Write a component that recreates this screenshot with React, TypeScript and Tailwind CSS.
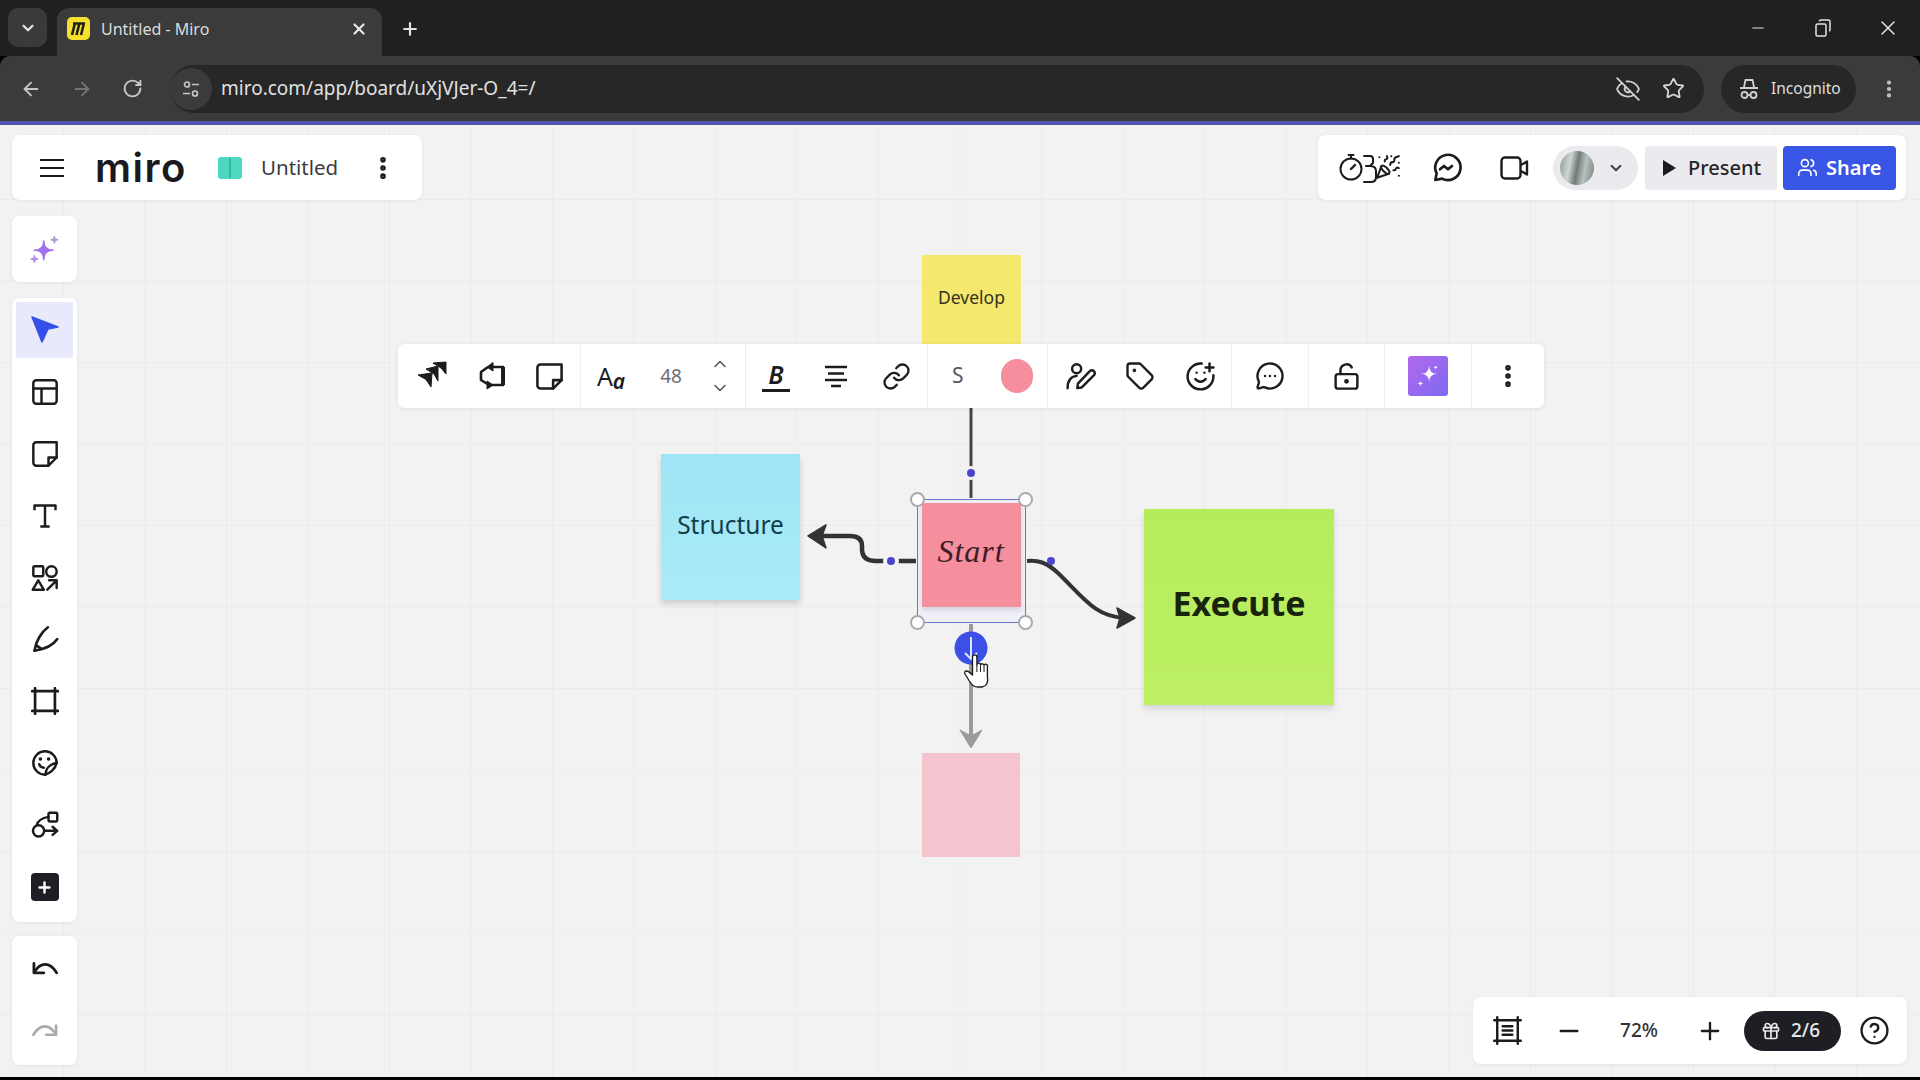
import type { ReactNode } from 'react'
import {
  ArrowLeft,
  ArrowRight,
  ChevronDown,
  ChevronUp,
  EllipsisVertical,
  EyeOff,
  Link,
  LockKeyholeOpen,
  MessageCircleMore,
  Minus,
  PartyPopper,
  Plus,
  RotateCw,
  SmilePlus,
  Star,
  Tag,
  Users,
  X,
  CircleHelp,
  Gift,
} from 'lucide-react'

// ── Small helpers ────────────────────────────────────────────────────────────
function Ico({ size = 28, sw = 2, className, children }: { size?: number; sw?: number; className?: string; children: ReactNode }) {
  return (
    <svg
      width={size}
      height={size}
      viewBox="0 0 24 24"
      fill="none"
      stroke="currentColor"
      strokeWidth={sw}
      strokeLinecap="round"
      strokeLinejoin="round"
      className={className}
    >
      {children}
    </svg>
  )
}

function star(cx: number, cy: number, r: number) {
  return `M${cx} ${cy - r}Q${cx} ${cy} ${cx + r} ${cy}Q${cx} ${cy} ${cx} ${cy + r}Q${cx} ${cy} ${cx - r} ${cy}Q${cx} ${cy} ${cx} ${cy - r}Z`
}

function ToolSlot({ children }: { children: ReactNode }) {
  return <div className="flex h-[62px] w-full items-center justify-center">{children}</div>
}

function Sec({ className, children }: { className: string; children: ReactNode }) {
  return <div className={`flex h-full items-center border-r border-[#efeff2] last:border-r-0 ${className}`}>{children}</div>
}

function Cell({ className = 'w-[60px]', children }: { className?: string; children: ReactNode }) {
  return <div className={`flex h-full items-center justify-center ${className}`}>{children}</div>
}

// ── Browser chrome ───────────────────────────────────────────────────────────
function TabStrip() {
  return (
    <div className="flex h-[56px] items-end bg-[#202020] pl-[8px] text-[#e3e3e3]">
      <div className="mb-[9px] flex h-[39px] w-[39px] items-center justify-center rounded-[10px] bg-[#3a3a3a]">
        <ChevronDown size={18} strokeWidth={3} />
      </div>
      <div className="ml-[10px] flex h-[48px] w-[325px] items-center rounded-t-[12px] bg-[#3b3b3b] pb-[7px] pl-[10px] pr-[14px]">
        <svg width="23" height="23" viewBox="0 0 23 23">
          <rect width="23" height="23" rx="5" fill="#f7e12f" />
          <path d="M8 6 L5 18 M12.5 6 L9.5 18 M17 6 L14 18 M6 6.5 H18" stroke="#26221a" strokeWidth="2.6" fill="none" />
        </svg>
        <span className="ml-[11px] flex-1 text-[16px] text-[#dcdcdc]">Untitled - Miro</span>
        <X size={18} strokeWidth={3} className="text-[#e6e6e6]" />
      </div>
      <Plus size={20} strokeWidth={2.6} className="mb-[17px] ml-[18px]" />
      <div className="mb-[8px] ml-auto flex h-[40px] items-center text-[#e3e3e3]">
        <Minus size={18} strokeWidth={1.6} className="mr-[48px]" />
        <svg width="16" height="18" viewBox="0 0 16 18" fill="none" stroke="currentColor" strokeWidth="1.5" className="mr-[45px]">
          <rect x="1" y="5" width="10" height="12" rx="1.5" />
          <path d="M4.5 2.5 V2 A1 1 0 0 1 5.5 1 H13.5 A1.5 1.5 0 0 1 15 2.5 V11 A1 1 0 0 1 14 12" />
        </svg>
        <X size={24} strokeWidth={1.5} className="mr-[20px]" />
      </div>
    </div>
  )
}

function AddressRow() {
  return (
    <div className="flex h-[65px] items-center rounded-t-[10px] bg-[#3b3b3b] text-[#c7c7c7]">
      <ArrowLeft size={22} strokeWidth={2} className="ml-[20px]" />
      <ArrowRight size={22} strokeWidth={2} className="ml-[29px] text-[#747474]" />
      <RotateCw size={21} strokeWidth={2.2} className="ml-[29px]" />
      <div className="ml-[27px] flex h-[48px] w-[1534px] items-center rounded-full bg-[#272727]">
        <div className="flex h-[42px] w-[42px] items-center justify-center rounded-full bg-[#3b3b3b]">
          <svg width="20" height="20" viewBox="0 0 20 20" fill="none" stroke="currentColor" strokeWidth="1.7">
            <circle cx="6" cy="5.5" r="2.5" />
            <path d="M11 5.5 H18 M2 14.5 H9" />
            <circle cx="14" cy="14.5" r="2.5" />
          </svg>
        </div>
        <span className="ml-[9px] flex-1 text-[19px] text-[#e1e1e1]">miro.com/app/board/uXjVJer-O_4=/</span>
        <EyeOff size={26} strokeWidth={1.7} className="text-[#cfcfcf]" />
        <Star size={23} strokeWidth={1.9} className="ml-[21px] mr-[19px] text-[#d6d6d6]" />
      </div>
      <div className="ml-[17px] flex h-[48px] w-[135px] items-center rounded-full bg-[#272727] pl-[16px]">
        <svg width="24" height="24" viewBox="0 0 24 24" fill="none" stroke="#d0d0d0" strokeWidth="1.8">
          <path d="M7 10 L8.5 3 H15.5 L17 10 M3 11 H21" />
          <circle cx="7.5" cy="18" r="3" />
          <circle cx="16.5" cy="18" r="3" />
          <path d="M10.5 18 H13.5" />
        </svg>
        <span className="ml-[10px] text-[15.5px] text-[#dedede]">Incognito</span>
      </div>
      <EllipsisVertical size={22} strokeWidth={2.6} className="ml-[22px] text-[#c4c4c4]" />
    </div>
  )
}

// ── Miro panels ──────────────────────────────────────────────────────────────
function BoardPanel() {
  return (
    <div className="flex h-[65px] w-[410px] items-center rounded-lg bg-white pl-[28px] shadow-[0_1px_4px_rgba(0,0,0,0.06)]">
      <svg width="24" height="20" viewBox="0 0 24 20" stroke="#1c1c1e" strokeWidth="2">
        <path d="M0 2 H24 M0 10 H24 M0 18 H24" />
      </svg>
      <span className="ml-[31px] w-[95px] font-['Inter',sans-serif] text-[40px] font-semibold leading-none tracking-[1.5px] text-[#1a1a1e]">miro</span>
      <svg width="24" height="24" viewBox="0 0 24 24" className="ml-[28px]">
        <rect y="1" width="24" height="22" rx="3" fill="#4fd8c0" />
        <path d="M12 2 V22" stroke="#2bb39c" strokeWidth="1.6" />
      </svg>
      <span className="ml-[19px] w-[108px] text-[20.5px] text-[#3b3b40]">Untitled</span>
      <EllipsisVertical size={28} strokeWidth={2.8} className="text-[#1c1c1e]" />
    </div>
  )
}

function SharePanel() {
  return (
    <div className="flex h-[65px] w-[588px] items-center rounded-lg bg-white pl-[21px] text-[#1c1c1e] shadow-[0_1px_4px_rgba(0,0,0,0.06)]">
      <svg width="38" height="34" viewBox="0 0 38 34" fill="none" stroke="currentColor" strokeWidth="2" strokeLinejoin="round" strokeLinecap="round">
        <circle cx="12" cy="18" r="10.5" />
        <path d="M12 5 V7.5 M9.5 4 H14.5" />
        <path d="M12 18 L16 14" strokeWidth="2.4" />
        <path d="M25 5 H31 Q34 5 34 8 V12 L31 15 Q37 15 37 20 V26 Q37 31 32 31 H25 M31 15 H27" />
      </svg>
      <PartyPopper size={26} strokeWidth={1.9} className="-ml-[2px] mb-[2px]" />
      <Ico size={32} className="ml-[29px]">
        <path d="M4 21 L5 16 A9.5 9.5 0 1 1 9 20 Z" />
        <path d="M7.5 13 L10.5 10.5 L13.5 13 L16.5 10.5" />
      </Ico>
      <svg width="29" height="24" viewBox="0 0 29 24" fill="none" stroke="currentColor" strokeWidth="2.4" strokeLinejoin="round" className="ml-[38px]">
        <rect x="1.5" y="1.5" width="19" height="21" rx="3.5" />
        <path d="M21 9 L27 5.5 V18.5 L21 15" />
      </svg>
      <div className="ml-[24px] flex h-[44px] w-[85px] items-center rounded-full bg-[#ebebef] pl-[7px]">
        <div className="h-[34px] w-[34px] rounded-full bg-[linear-gradient(100deg,#8b9794,#cfd5d2_30%,#6f7b78_50%,#b9c1bd_70%,#76817e)]" />
        <ChevronDown size={18} strokeWidth={2.4} className="ml-[13px] text-[#3b3b40]" />
      </div>
      <div className="ml-[7px] flex h-[44px] w-[132px] items-center rounded-[4px] bg-[#ebebef] pl-[18px] text-[#26262b]">
        <svg width="13" height="16" viewBox="0 0 13 16" fill="#1c1c1e">
          <path d="M0 0 L13 8 L0 16 Z" />
        </svg>
        <span className="ml-[12px] text-[20px] font-medium">Present</span>
      </div>
      <div className="ml-[6px] flex h-[44px] w-[113px] items-center rounded-[4px] bg-[#3855e5] pl-[14px] text-white">
        <Users size={21} strokeWidth={1.8} />
        <span className="ml-[8px] text-[20px] font-semibold">Share</span>
      </div>
    </div>
  )
}

function LeftRail() {
  return (
    <div className="flex w-[65px] flex-col text-[#1c1c1e]">
      <div className="flex h-[66px] items-center justify-center rounded-lg bg-white shadow-[0_1px_4px_rgba(0,0,0,0.06)]">
        <svg width="30" height="30" viewBox="0 0 24 24" fill="#a273ec" stroke="#a273ec" strokeWidth="1.2" strokeLinejoin="round">
          <path d={star(11, 13, 7.5)} />
          <path d={star(19.5, 4.5, 2.6)} fill="#b39ad9" stroke="#b39ad9" />
          <path d={star(3.5, 20, 2.6)} fill="#b68cf0" stroke="#b68cf0" />
        </svg>
      </div>

      <div className="mt-[16px] flex h-[624px] flex-col items-center rounded-lg bg-white p-[4px] shadow-[0_1px_4px_rgba(0,0,0,0.06)]">
        <div className="mb-[3px] flex h-[56px] w-[57px] items-center justify-center bg-[#e8eafb]">
          <svg width="30" height="30" viewBox="0 0 30 30" fill="#3450e8" stroke="#3450e8" strokeWidth="1.5" strokeLinejoin="round">
            <path d="M2 2 L28 12 L18 14 L12 27 Z" />
          </svg>
        </div>
        <ToolSlot>
          <Ico sw={2.1}>
            <rect x="2" y="2" width="20" height="20" rx="2.5" />
            <path d="M2 9 H22 M9 9 V22" />
          </Ico>
        </ToolSlot>
        <ToolSlot>
          <Ico sw={2.1}>
            <path d="M4.5 2 H22 V15 L15 22 H4.5 A2.5 2.5 0 0 1 2 19.5 V4.5 A2.5 2.5 0 0 1 4.5 2 Z" />
            <path d="M15 22 V15 H22" />
          </Ico>
        </ToolSlot>
        <ToolSlot>
          <Ico sw={2.1}>
            <path d="M3 7 V3 H21 V7 M12 3 V21 M8 21 H16" strokeLinecap="butt" />
          </Ico>
        </ToolSlot>
        <ToolSlot>
          <Ico sw={2.1}>
            <rect x="2" y="2" width="8.5" height="8.5" rx="1" />
            <circle cx="17.5" cy="6.5" r="4.5" />
            <path d="M6.2 14 L11 22 H1.5 Z" />
            <path d="M14 22 L22 14 M15.5 14 H22 V20.5" />
          </Ico>
        </ToolSlot>
        <ToolSlot>
          <Ico sw={2.2}>
            <path d="M3 22 C4 14 9 6 14.5 2" />
            <path d="M3 22 C10 21 18 19 22.5 12" />
            <path d="M4.5 17.5 L9 20.5" />
          </Ico>
        </ToolSlot>
        <ToolSlot>
          <Ico sw={2.3}>
            <path d="M3.5 1 V23 M20.5 1 V23 M1 3.5 H23 M1 20.5 H23" />
          </Ico>
        </ToolSlot>
        <ToolSlot>
          <Ico sw={2.1}>
            <path d="M22 12 A10 10 0 1 0 12 22 C16 21 21 17 22 12 Z" />
            <path d="M12.5 22 C12.5 17 16 13 22 12" />
            <path d="M7 13 Q8 16 11 16" />
            <path d="M8 8.5 H8.1 M15 8.5 H15.1" strokeWidth="3" />
          </Ico>
        </ToolSlot>
        <ToolSlot>
          <Ico sw={2.1}>
            <circle cx="6.5" cy="17" r="4.8" />
            <rect x="15" y="1.5" width="7.5" height="7.5" rx="1" />
            <path d="M5 12 C6 8 9 6 15 5" />
            <path d="M11.5 17 H22 M18.5 13.5 L22.5 17 L18.5 20.5" />
          </Ico>
        </ToolSlot>
        <ToolSlot>
          <div className="flex h-[28px] w-[28px] items-center justify-center rounded-[4px] bg-[#1e1f25]">
            <Plus size={17} strokeWidth={3.4} className="text-white" />
          </div>
        </ToolSlot>
      </div>

      <div className="mt-[14px] flex h-[129px] flex-col items-center rounded-lg bg-white shadow-[0_1px_4px_rgba(0,0,0,0.06)]">
        <ToolSlot>
          <Ico sw={2.4}>
            <path d="M2.5 9 V17 H11" />
            <path d="M3 16 C8 8 16 7 22 17" />
          </Ico>
        </ToolSlot>
        <ToolSlot>
          <Ico sw={2.2} className="text-[#a9aab0]">
            <path d="M21.5 9 V17 H13" />
            <path d="M21 16 C16 8 8 7 2 17" />
          </Ico>
        </ToolSlot>
      </div>
    </div>
  )
}

function ZoomPanel() {
  return (
    <div className="-mr-px flex h-[67px] w-[434px] items-center rounded-lg bg-white pl-[20px] text-[#1c1c1e] shadow-[0_1px_4px_rgba(0,0,0,0.06)]">
      <Ico size={29} sw={2}>
        <path d="M3.5 1 V23 M20.5 1 V23 M1 3.5 H23 M1 20.5 H23" />
        <path d="M8 8.5 H16 M8 12 H16 M8 15.5 H16" />
      </Ico>
      <Minus size={28} strokeWidth={2.2} className="ml-[33px]" />
      <span className="ml-[18px] w-[76px] text-center text-[19px] font-medium text-[#333338]">72%</span>
      <Plus size={28} strokeWidth={2} className="ml-[19px]" />
      <div className="ml-[20px] flex h-[40px] w-[97px] items-center rounded-full bg-[#1e1f25] pl-[17px] text-[#e9e9ea]">
        <Gift size={20} strokeWidth={2} />
        <span className="ml-[10px] text-[19px] font-medium">2/6</span>
      </div>
      <CircleHelp size={31} strokeWidth={1.8} className="ml-[18px]" />
    </div>
  )
}

function ContextBar() {
  return (
    <div className="absolute left-[398px] top-[219px] flex h-[64px] items-center rounded-md bg-white text-[#1c1c1e] shadow-[0_1px_5px_rgba(0,0,0,0.08)]">
      <Sec className="w-[183px] pl-[4px]">
        <Cell className="w-[59px]">
          <svg width="30" height="30" viewBox="0 0 30 30" fill="currentColor" stroke="currentColor" strokeWidth="1" strokeLinejoin="round">
            <path d="M16 2 L29 1 V13 L24 7 Z" />
            <path d="M9 8 L21 5 V20 L17 13 Z" />
            <path d="M1 14 L15 12 L14 26 L9 18.5 Z" />
          </svg>
        </Cell>
        <Cell className="w-[59px]">
          <svg width="30" height="30" viewBox="0 0 30 30" fill="none" stroke="currentColor" strokeWidth="2.6" strokeLinejoin="round">
            <path d="M16 6 H27 V24 H13 L5 19 V11 L12 6" />
            <path d="M27 6 V24" strokeWidth="4" />
            <path d="M17 1.5 V10 L11 6 Z" fill="currentColor" strokeWidth="1" />
            <path d="M11 20 V28 L17 24 Z" fill="currentColor" strokeWidth="1" />
          </svg>
        </Cell>
        <Cell className="w-[59px]">
          <Ico size={29} sw={2.1}>
            <path d="M4.5 2 H22 V15 L15 22 H4.5 A2.5 2.5 0 0 1 2 19.5 V4.5 A2.5 2.5 0 0 1 4.5 2 Z" />
            <path d="M15 22 V15 H22" />
          </Ico>
        </Cell>
      </Sec>
      <Sec className="w-[165px]">
        <Cell>
          <span className="text-[25px] leading-none">A</span>
          <span className="mt-[10px] text-[21px] font-semibold italic leading-none">a</span>
        </Cell>
        <Cell>
          <span className="text-[19px] text-[#6e6e73]">48</span>
        </Cell>
        <Cell className="w-[38px] flex-col gap-[4px] text-[#55555a]">
          <ChevronUp size={20} strokeWidth={1.9} />
          <ChevronDown size={20} strokeWidth={1.9} />
        </Cell>
      </Sec>
      <Sec className="w-[182px]">
        <Cell className="w-[60px] flex-col">
          <span className="text-[25px] font-semibold italic leading-[26px]">B</span>
          <span className="mt-[2px] h-[3px] w-[28px] bg-[#1c1c1e]" />
        </Cell>
        <Cell>
          <svg width="24" height="24" viewBox="0 0 24 24" stroke="currentColor" strokeWidth="2.4">
            <path d="M1 3 H23 M4 9.5 H20 M1 16 H23 M7 22 H17" />
          </svg>
        </Cell>
        <Cell>
          <Link size={29} strokeWidth={1.9} />
        </Cell>
      </Sec>
      <Sec className="w-[120px]">
        <Cell>
          <span className="text-[21px] text-[#55555a]">S</span>
        </Cell>
        <Cell>
          <span className="h-[34px] w-[32px] rounded-full bg-[#f58e9d]" />
        </Cell>
      </Sec>
      <Sec className="w-[184px] pl-[2px]">
        <Cell>
          <Ico size={31} sw={1.9}>
            <circle cx="9" cy="6" r="3.5" />
            <path d="M2 21 C2 15 5 12 9 11.5" />
            <path d="M9.5 21 L10 17.5 L19 8 A2 2 0 0 1 22.5 11 L13 20.5 Z" />
          </Ico>
        </Cell>
        <Cell>
          <Tag size={30} strokeWidth={1.9} />
        </Cell>
        <Cell>
          <SmilePlus size={31} strokeWidth={1.9} />
        </Cell>
      </Sec>
      <Sec className="w-[77px] justify-center">
        <MessageCircleMore size={30} strokeWidth={1.9} />
      </Sec>
      <Sec className="w-[76px] justify-center">
        <LockKeyholeOpen size={29} strokeWidth={2} />
      </Sec>
      <Sec className="w-[87px] justify-center">
        <div className="flex h-[40px] w-[40px] items-center justify-center rounded-[3px] bg-[linear-gradient(135deg,#b268ee,#7d6af0)]">
          <svg width="26" height="26" viewBox="0 0 24 24" fill="#fff">
            <path d={star(13, 10, 8)} />
            <path d={star(5, 19, 3)} />
            <path d={star(19, 4, 2.5)} />
          </svg>
        </div>
      </Sec>
      <Sec className="w-[72px] justify-center">
        <EllipsisVertical size={28} strokeWidth={2.8} />
      </Sec>
    </div>
  )
}

// ── Board content ────────────────────────────────────────────────────────────
function Board() {
  return (
    <>
      <div className="absolute left-[922px] top-[130px] flex h-[92px] w-[99px] justify-center bg-[#f5e86f] pt-[29px] text-[17.5px] text-[#33331e]">
        Develop
      </div>
      <div className="absolute left-[661px] top-[329px] flex h-[146px] w-[139px] items-center justify-center bg-[linear-gradient(#9fe5f5,#aaebfa)] pb-[3px] text-[24.5px] text-[#123e4a] shadow-[0_4px_6px_rgba(0,0,0,0.15)]">
        Structure
      </div>
      <div className="absolute left-[1144px] top-[384px] flex h-[196px] w-[190px] items-center justify-center bg-[linear-gradient(#b5ec5c,#bdf064)] pb-[8px] text-[34px] font-bold text-[#18240d] shadow-[0_4px_6px_rgba(0,0,0,0.12)]">
        Execute
      </div>
      <div className="absolute left-[922px] top-[628px] h-[104px] w-[98px] bg-[#f5c5cf]" />

      {/* selection frame + sticky */}
      <div className="absolute left-[917px] top-[374px] h-[124px] w-[109px] border-[1.5px] border-[#6a75c9] bg-[#f0f1f8]">
        <div className="ml-[3.5px] mt-[3px] flex h-[104px] w-[99px] items-center justify-center bg-[#f58e9d] pb-[8px] font-['Liberation_Serif',serif] text-[32px] italic tracking-[1px] text-[#3c1c26] shadow-[0_3px_5px_rgba(0,0,0,0.12)]">
          Start
        </div>
        <span className="absolute -left-[8px] -top-[8px] h-[15px] w-[15px] rounded-full border-[2px] border-[#a9a9ad] bg-white" />
        <span className="absolute -right-[8px] -top-[8px] h-[15px] w-[15px] rounded-full border-[2px] border-[#a9a9ad] bg-white" />
        <span className="absolute -bottom-[8px] -left-[8px] h-[15px] w-[15px] rounded-full border-[2px] border-[#a9a9ad] bg-white" />
        <span className="absolute -bottom-[8px] -right-[8px] h-[15px] w-[15px] rounded-full border-[2px] border-[#a9a9ad] bg-white" />
      </div>

      {/* connectors use page coordinates */}
      <svg className="absolute inset-0 h-full w-full" viewBox="0 125 1920 952" fill="none">
        <path d="M971 408 V498" stroke="#444" strokeWidth="3" />
        <circle cx="971" cy="473" r="7" fill="#f2f2f2" />
        <circle cx="971" cy="473" r="4" fill="#4b44c8" />

        <path d="M916 561 H876 Q862 561 862 549 V546 Q862 536 850 536 H822" stroke="#333" strokeWidth="4.5" />
        <path d="M808 536 L826 525 L822 536 L826 548 Z" fill="#333" stroke="#333" strokeWidth="1.5" strokeLinejoin="round" />
        <circle cx="891" cy="561" r="8" fill="#f2f2f2" />
        <circle cx="891" cy="561" r="4" fill="#4b44c8" />

        <path d="M1027 561 C1038 560 1046 562 1058 573 C1083 597 1095 617 1125 618" stroke="#333" strokeWidth="4" />
        <path d="M1135 618 L1117 608 L1120 618 L1117 628 Z" fill="#333" stroke="#333" strokeWidth="1.5" strokeLinejoin="round" />
        <circle cx="1051" cy="561" r="4" fill="#4b44c8" />

        <path d="M971 624 V736" stroke="#9a9a9a" strokeWidth="4" />
        <path d="M971 748 L960 730 L971 736 L982 730 Z" fill="#9a9a9a" stroke="#9a9a9a" strokeLinejoin="round" />

        <circle cx="971" cy="648" r="16.5" fill="#3c50e6" />
        <path d="M971 637 V659 M965 653 L971 659 L977 653" stroke="#dfe3ff" strokeWidth="2" />

        <path
          d="M972.5 657 a2.2 2.2 0 0 1 4.4 0 V665 a1.8 1.8 0 0 1 3.6 0 a1.8 1.8 0 0 1 3.5 .5 a1.7 1.7 0 0 1 3.4 1 V676 Q989 686 982 687 H978 Q973 687 970 682 L965 674 Q964 671 966.5 671 Q968.5 671 972.5 675 Z"
          fill="#fff"
          stroke="#1a1a1a"
          strokeWidth="1.3"
          strokeLinejoin="round"
        />
        <path d="M976.9 665 V672 M980.5 665.5 V672 M984 666 V672" stroke="#1a1a1a" strokeWidth="1" />
      </svg>
    </>
  )
}

export default function App() {
  return (
    <div className="flex h-screen w-screen flex-col overflow-hidden bg-black font-['Noto_Sans',sans-serif]">
      <TabStrip />
      <AddressRow />
      <div className="h-[4px] bg-[#4f55b0]" />

      {/* Canvas */}
      <div className="relative mb-[3px] flex flex-1 flex-col bg-[#f2f2f2] bg-[linear-gradient(to_right,#ebebeb_1px,transparent_1px),linear-gradient(to_bottom,#ebebeb_1px,transparent_1px)] bg-[size:81.5px_81.5px] bg-[position:63px_74px] pb-[12px] pl-[12px] pr-[14px] pt-[10px]">
        <Board />
        <div className="relative flex justify-between">
          <BoardPanel />
          <SharePanel />
        </div>
        <div className="relative mt-[16px] flex flex-1 items-end justify-between">
          <LeftRail />
          <div className="mb-px">
            <ZoomPanel />
          </div>
        </div>
        <ContextBar />
      </div>
    </div>
  )
}
